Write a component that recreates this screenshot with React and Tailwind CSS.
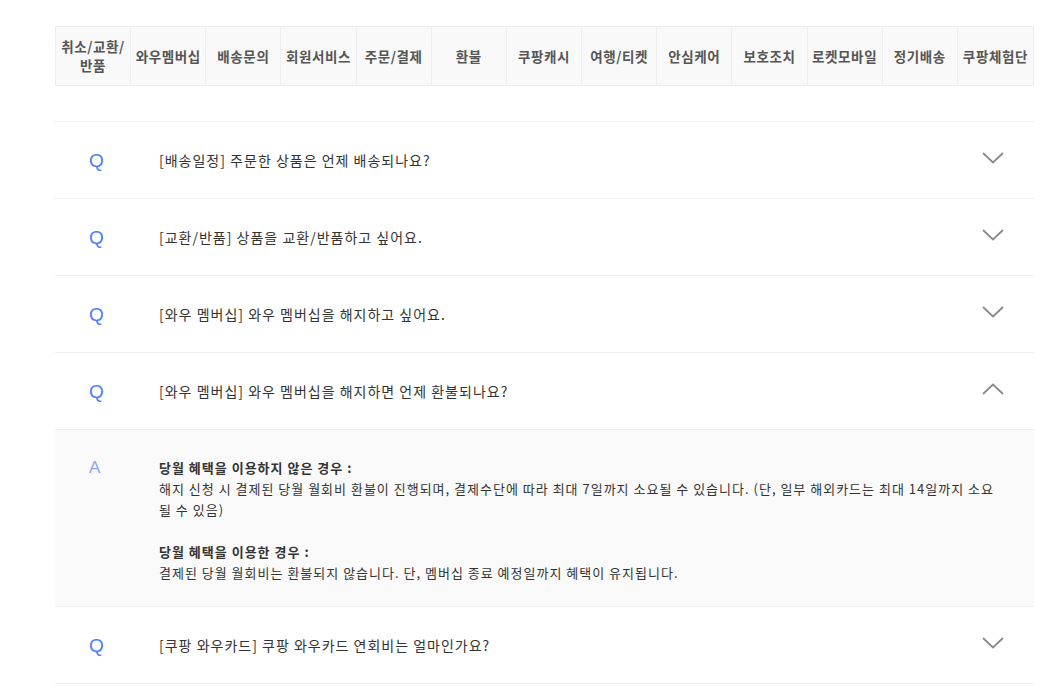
import React from "react";

const tabs = ["취소/교환/반품","와우멤버십","배송문의","회원서비스","주문/결제","환불","쿠팡캐시","여행/티켓","안심케어","보호조치","로켓모바일","정기배송","쿠팡체험단"];

const Chevron = ({ up }) => (
  <svg width="22" height="12" viewBox="0 0 22 12" fill="none" className="block">
    {up ? (
      <path d="M1 11 L11 1.5 L21 11" stroke="#8a8a8a" strokeWidth="1.8" />
    ) : (
      <path d="M1 1 L11 10.5 L21 1" stroke="#8a8a8a" strokeWidth="1.8" />
    )}
  </svg>
);

const Row = ({ text, open }) => (
  <div className="flex h-[77px] items-center border-b border-[#eeeeee]">
    <div className="w-[104px] shrink-0 pl-[34px] text-[19px] leading-none text-[#4a7dff]" style={{fontFamily:'"Liberation Sans", Arial, sans-serif'}}>Q</div>
    <div className="flex-1 text-[14px] tracking-[1px] text-[#333]">{text}</div>
    <div className="mr-[30px] -mt-[5px]"><Chevron up={open} /></div>
  </div>
);

export default function App() {
  return (
    <div className="min-h-[694px] bg-white" style={{ fontFamily: '"Noto Sans CJK KR", "Noto Sans", sans-serif' }}>
      <div className="ml-[55px] w-[979px] pt-[26px]">
        <div className="grid h-[60px] grid-cols-[repeat(13,1fr)] border border-[#eeeeee] bg-[#f9f9f9]">
          {tabs.map((t, i) => (
            <div key={t} className={`flex items-center justify-center text-center text-[13.5px] font-bold leading-[19px] tracking-[0.6px] text-[#555] ${i < 12 ? "border-r border-[#eeeeee]" : ""}`}>
              <span className="px-[2px]">{t}</span>
            </div>
          ))}
        </div>

        <div className="mt-[35px] border-t border-[#eeeeee]">
          <Row text="[배송일정] 주문한 상품은 언제 배송되나요?" />
          <Row text="[교환/반품] 상품을 교환/반품하고 싶어요." />
          <Row text="[와우 멤버십] 와우 멤버십을 해지하고 싶어요." />
          <Row text="[와우 멤버십] 와우 멤버십을 해지하면 언제 환불되나요?" open />
          <div className="flex border-b border-[#eeeeee] bg-[#fafafa] pt-[27px] pb-[23px]">
            <div className="w-[104px] shrink-0 pl-[34px] text-[17px] leading-[21px] text-[#8fa5ee]" style={{fontFamily:'"Liberation Sans", Arial, sans-serif'}}>A</div>
            <div className="flex-1 pr-[30px] text-[13px] leading-[21px] tracking-[1px] text-[#333]">
              <p className="font-bold">당월 혜택을 이용하지 않은 경우 :</p>
              <p>해지 신청 시 결제된 당월 월회비 환불이 진행되며, 결제수단에 따라 최대 7일까지 소요될 수 있습니다. (단, 일부 해외카드는 최대 14일까지 소요<br />될 수 있음)</p>
              <p className="h-[21px]"></p>
              <p className="font-bold">당월 혜택을 이용한 경우 :</p>
              <p>결제된 당월 월회비는 환불되지 않습니다. 단, 멤버십 종료 예정일까지 혜택이 유지됩니다.</p>
            </div>
          </div>
          <Row text="[쿠팡 와우카드] 쿠팡 와우카드 연회비는 얼마인가요?" />
        </div>
      </div>
    </div>
  );
}
